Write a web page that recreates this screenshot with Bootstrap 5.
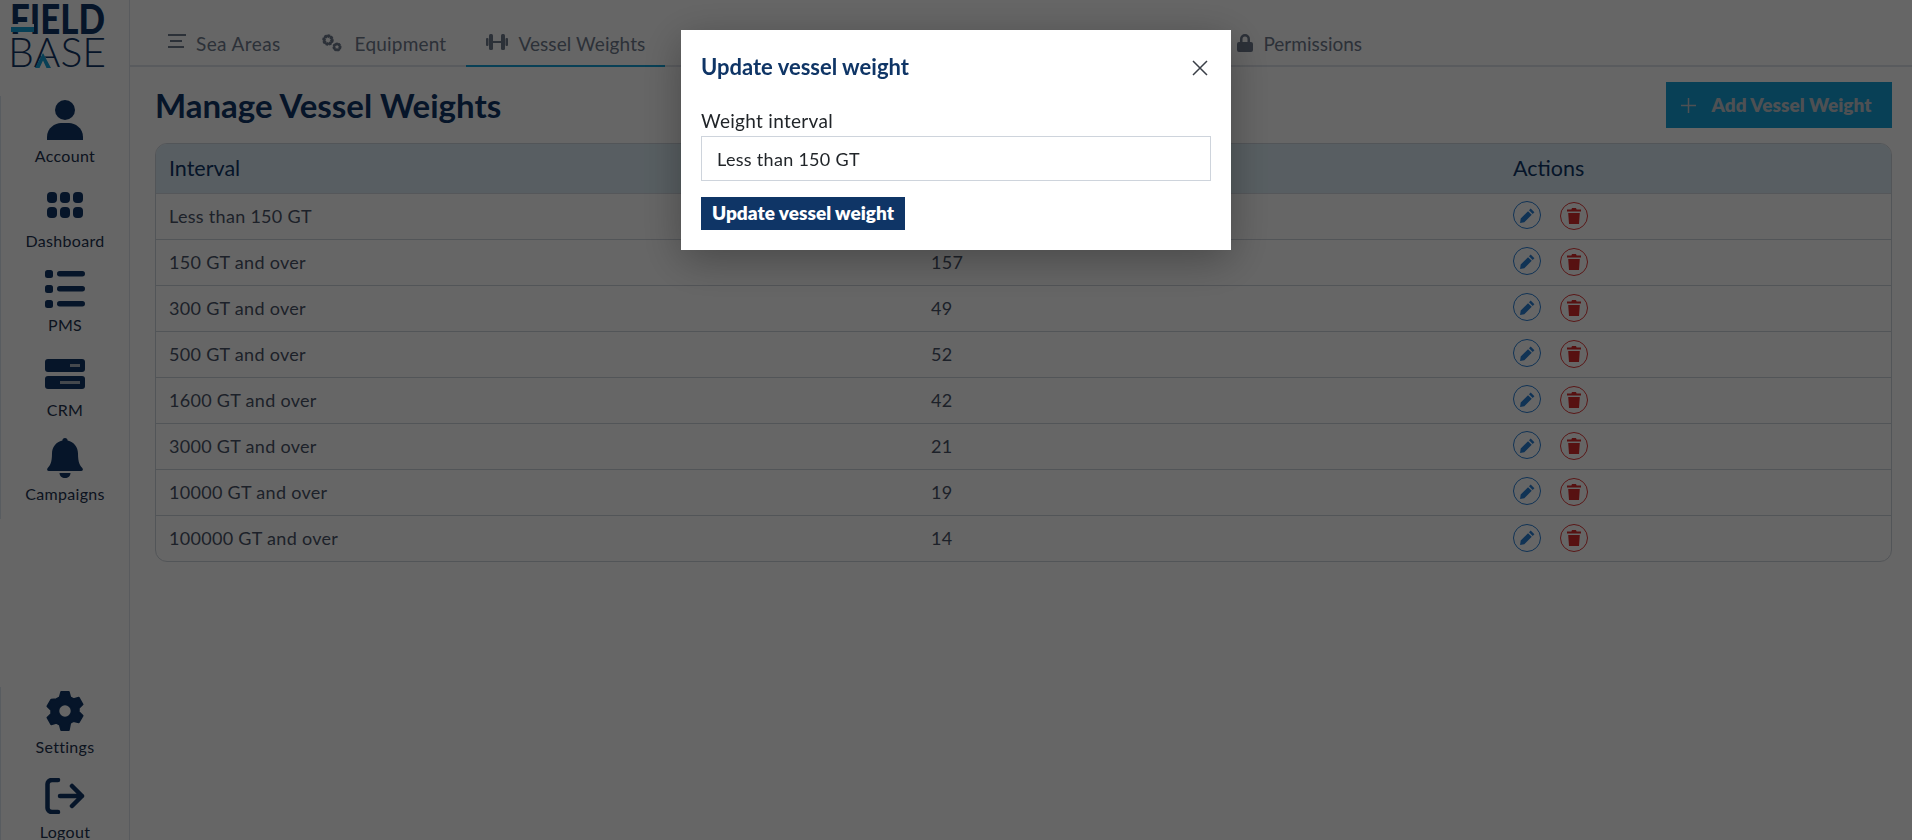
<!DOCTYPE html>
<html lang="en">
  <head>
    <meta charset="utf-8" />
    <meta name="viewport" content="width=device-width, initial-scale=1" />
    <title>Manage Vessel Weights</title>
    <link href="https://cdn.jsdelivr.net/npm/bootstrap@5.3.3/dist/css/bootstrap.min.css" rel="stylesheet" />
    <style>
      html, body { height: 100%; overflow: hidden; }
      body {
        font-family: "Lato", "Noto Sans", sans-serif;
        background: #fff;
        color: #3f4a5f;
      }
      .shell { height: 840px; }
      .side-bar {
        width: 130px;
        flex: none;
        border-right: 1px solid #dfe3ea;
      }
      .logo-box {
        height: 70px;
        padding: 2px 0 0 10px;
        position: relative;
        color: #0f3566;
      }
      .logo-top { font-size: 41px; font-weight: 900; line-height: 34px; transform: scaleX(0.85); transform-origin: left center; }
      .logo-low { font-size: 41px; font-weight: 300; line-height: 32px; margin-left: -2px; }
      .logo-bar { position: absolute; left: 11px; top: 24px; width: 23px; height: 8px; border-top: 3px solid #fff; background: #14a0d6; }
      .logo-peak { position: absolute; left: 34px; top: 52px; }
      .side-link {
        height: 84.5px;
        color: #0f3566;
        font-size: 16px;
        letter-spacing: 0.3px;
        text-decoration: none;
        border-left: 1px solid #dce6f0;
      }
      .side-link span { line-height: 18px; color: #22324f; margin-top: 3px; }
      .side-icon { height: 48px; display: flex; align-items: center; justify-content: center; }
      .side-list { padding-top: 26px; }
      .side-foot { margin-top: auto; margin-bottom: -16px; }
      .main-area { min-width: 0; padding: 0 20px 0 25px; }
      .tab-row { height: 67px; margin-left: -25px; margin-right: -20px; padding-left: 18px; border-bottom: 2px solid #dfe3ea; }
      .tab-item {
        height: 67px;
        padding: 27px 20px 0;
        color: #6f7a8d;
        font-size: 19px;
        letter-spacing: 0.4px;
        line-height: 33px;
        display: flex;
        gap: 10px;
        text-decoration: none;
        border-bottom: 2px solid transparent;
      }
      .tab-item svg { margin-top: 7px; flex: none; }
      .tab-equip { letter-spacing: 0.2px; }
      .tab-equip svg { margin-right: 2px; }
      .tab-on { border-bottom-color: #14a0d6; letter-spacing: 0.1px; }
      .tab-lock { letter-spacing: 0; }
      .tab-gap { width: 552px; flex: none; }
      .head-row { height: 76px; padding-top: 15px; }
      .page-title { color: #0f3566; font-size: 33px; font-weight: 700; margin: 4px 0 0; line-height: 38px; }
      .add-btn {
        background: #14a0d6;
        color: #c4c9cf;
        border: 0;
        border-radius: 0;
        height: 46px;
        width: 226px;
        font-size: 19px;
        font-weight: 800;
        padding-right: 18px;
      }
      .add-btn:hover { background: #14a0d6; color: #c4c9cf; }
      .grid-wrap {
        border: 1px solid #ced4dc;
        border-radius: 12px;
        overflow: hidden;
      }
      .grid-tbl { table-layout: fixed; margin: 0; width: 100%; }
      .grid-tbl th {
        background: #dcecf4;
        color: #0f3566;
        font-size: 21.500px;
        font-weight: 400;
        height: 49px;
        padding: 0 13px;
        vertical-align: middle;
        border-bottom: 1px solid #d5dae2;
      }
      .grid-tbl td {
        height: 46px;
        padding: 0 13px;
        vertical-align: middle;
        font-size: 18px;
        letter-spacing: 0.3px;
        color: #4a5468;
        border-bottom: 1px solid #ced4dc;
      }
      .grid-tbl tr:last-child td { border-bottom: 0; }
      .col-a { width: 762px; }
      .col-b { width: 582px; }
      .act-btn {
        width: 28px;
        height: 28px;
        border-radius: 50%;
        background: transparent;
        padding: 0;
        display: inline-flex;
        align-items: center;
        justify-content: center;
        border: 1.2px solid #2a7fd5;
      }
      .act-del { border-color: #e03a3a; margin-left: 19px; }
      .modal-backdrop.show { opacity: 0.6; }
      .modal-dialog.weight-dlg { max-width: 550px; margin: 30px auto 0; }
      .weight-dlg .modal-content {
        border: 0;
        border-radius: 0;
        box-shadow: 0 10px 40px rgba(0, 0, 0, 0.3);
        padding: 20px;
        height: 220px;
      }
      .dlg-title { color: #0f3566; font-size: 22px; font-weight: 700; margin: 0; line-height: 34px; }
      .dlg-close { line-height: 0; margin: 10px 3px 0 0; }
      .dlg-label { font-size: 19px; letter-spacing: 0.3px; color: #212529; margin: 24px 0 0; line-height: 26px; }
      .dlg-input {
        border-radius: 0;
        height: 45px;
        border: 1px solid #ced4dc;
        padding: 0 15px;
        font-size: 18px;
        letter-spacing: 0.3px;
        color: #212529;
        margin-top: 2px;
      }
      .dlg-btn {
        background: #0f3566;
        color: #fff;
        border: 0;
        border-radius: 0;
        height: 33px;
        width: 204px;
        padding: 0;
        font-size: 19px;
        font-weight: 800;
        margin-top: 16px;
      }
      .dlg-btn:hover { background: #0f3566; color: #fff; }
    </style>
  </head>
  <body>
    <div class="d-flex shell">
      <aside class="side-bar d-flex flex-column">
        <div class="logo-box">
          <div class="logo-top">FIELD</div>
          <div class="logo-low">BASE</div>
          <div class="logo-bar"></div>
          <svg class="logo-peak" width="18" height="16" viewBox="0 0 18 16"><path d="M9 0l7 16H2z" fill="#fff"/><path d="M9 1l8 15h-4.500L9 8.500 5.500 16H1z" fill="#14a0d6"/></svg>
        </div>
        <nav class="side-list d-flex flex-column flex-grow-1">
          <a class="side-link d-flex flex-column align-items-center" href="#">
            <div class="side-icon"><svg width="36" height="40" viewBox="0 0 36 40" fill="#0f3566"><circle cx="18" cy="10" r="10"/><path d="M0 40v-3c0-9 8-14 14-14h8c6 0 14 5 14 14v3z"/></svg></div>
            <span>Account</span>
          </a>
          <a class="side-link d-flex flex-column align-items-center" href="#">
            <div class="side-icon"><svg width="36" height="26" viewBox="0 0 36 26" fill="#0f3566"><rect width="10" height="11" rx="4"/><rect x="13" width="10" height="11" rx="4"/><rect x="26" width="10" height="11" rx="4"/><rect y="15" width="10" height="11" rx="4"/><rect x="13" y="15" width="10" height="11" rx="4"/><rect x="26" y="15" width="10" height="11" rx="4"/></svg></div>
            <span>Dashboard</span>
          </a>
          <a class="side-link d-flex flex-column align-items-center" href="#">
            <div class="side-icon"><svg width="40" height="38" viewBox="0 0 40 38" fill="#0f3566"><rect width="8" height="8" rx="2.500"/><rect y="15" width="8" height="8" rx="2.500"/><rect y="30" width="8" height="8" rx="2.500"/><rect x="12" y="1" width="28" height="5.500" rx="2.700"/><rect x="12" y="16" width="28" height="5.500" rx="2.700"/><rect x="12" y="31" width="28" height="5.500" rx="2.700"/></svg></div>
            <span>PMS</span>
          </a>
          <a class="side-link d-flex flex-column align-items-center" href="#">
            <div class="side-icon"><svg width="40" height="30" viewBox="0 0 40 30"><rect width="40" height="13" rx="3" fill="#0f3566"/><rect y="17" width="40" height="13" rx="3" fill="#0f3566"/><rect x="25" y="5" width="10" height="3" fill="#aab3c0"/><rect x="15" y="22" width="20" height="3" fill="#aab3c0"/></svg></div>
            <span>CRM</span>
          </a>
          <a class="side-link d-flex flex-column align-items-center" href="#">
            <div class="side-icon"><svg width="36" height="40" viewBox="0 0 36 40" fill="#0f3566"><path d="M18 0c1.600 0 2.600 1.100 2.600 2.600C27 4 31 9.400 31 15.500c0 9 2 12 4.300 14.600.8.900 1 2.900-1 2.900H1.700c-2 0-1.800-2-1-2.900C3 27.500 5 24.500 5 15.500 5 9.400 9 4 15.400 2.600 15.400 1.100 16.400 0 18 0z"/><path d="M12.500 35h11c0 3-2.500 5-5.500 5s-5.500-2-5.500-5z"/></svg></div>
            <span>Campaigns</span>
          </a>
          <div class="side-foot">
            <a class="side-link d-flex flex-column align-items-center" href="#">
              <div class="side-icon"><svg width="38" height="40" viewBox="-1 -1 40 42"><path fill="#0f3566" stroke="#0f3566" stroke-width="2" stroke-linejoin="round" fill-rule="evenodd" d="M15 0h8l1.500 5.500 3.500 2 5.500-1.500 4 7-4 4v4l4 4-4 7-5.500-1.500-3.500 2L23 40h-8l-1.500-5.500-3.500-2L4.500 34l-4-7 4-4v-4l-4-4 4-7L10 7.500l3.500-2zM19 13a7 7 0 1 0 0 14 7 7 0 0 0 0-14z"/></svg></div>
              <span>Settings</span>
            </a>
            <a class="side-link d-flex flex-column align-items-center" href="#">
              <div class="side-icon"><svg width="40" height="36" viewBox="0 0 40 36" fill="none" stroke="#0f3566" stroke-width="4.500" stroke-linecap="round" stroke-linejoin="round"><path d="M13 2H7C4 2 2.500 4 2.500 6v24C2.500 32 4 34 7 34h6"/><path d="M15 18h22M27 8l10 10-10 10"/></svg></div>
              <span>Logout</span>
            </a>
          </div>
        </nav>
      </aside>

      <main class="main-area flex-grow-1">
        <div class="tab-row d-flex">
          <a class="tab-item" href="#"><svg width="18" height="14" viewBox="0 0 18 14" fill="#6f7a8d"><rect width="18" height="2"/><rect x="2" y="6" width="12" height="2"/><rect y="12" width="16" height="2"/></svg>Sea Areas</a>
          <a class="tab-item tab-equip" href="#"><svg width="22" height="18" viewBox="0 0 22 18"><circle cx="7" cy="6" r="4" fill="none" stroke="#6f7a8d" stroke-width="3.500" stroke-dasharray="2.200 .8"/><circle cx="7" cy="6" r="4" fill="none" stroke="#6f7a8d" stroke-width="2"/><circle cx="16" cy="13" r="3" fill="none" stroke="#6f7a8d" stroke-width="3" stroke-dasharray="1.800 .7"/><circle cx="16" cy="13" r="3" fill="none" stroke="#6f7a8d" stroke-width="1.800"/></svg>Equipment</a>
          <a class="tab-item tab-on" href="#"><svg width="22" height="16" viewBox="0 0 22 16" fill="#6f7a8d"><rect x="0" y="4" width="2.500" height="8" rx="1"/><rect x="3" y="0" width="4" height="16" rx="1.500"/><rect x="7" y="7" width="8" height="2"/><rect x="15" y="0" width="4" height="16" rx="1.500"/><rect x="19.500" y="4" width="2.500" height="8" rx="1"/></svg>Vessel Weights</a>
          <div class="tab-gap"></div>
          <a class="tab-item tab-lock" href="#"><svg width="16" height="18" viewBox="0 0 16 18" fill="#6f7a8d"><path d="M3 8V5a5 5 0 0 1 10 0v3h1a2 2 0 0 1 2 2v6a2 2 0 0 1-2 2H2a2 2 0 0 1-2-2v-6a2 2 0 0 1 2-2zm2.500 0h5V5a2.500 2.500 0 0 0-5 0z"/></svg>Permissions</a>
        </div>

        <div class="head-row d-flex justify-content-between align-items-start">
          <h1 class="page-title">Manage Vessel Weights</h1>
          <button class="btn add-btn d-flex align-items-center justify-content-center gap-3" type="button">
            <svg width="15" height="15" viewBox="0 0 15 15" stroke="#c4c9cf" stroke-width="1.500"><path d="M7.500 0v15M0 7.500h15"/></svg>Add Vessel Weight
          </button>
        </div>

        <div class="grid-wrap">
          <table class="table grid-tbl">
            <thead>
              <tr><th class="col-a">Interval</th><th class="col-b"></th><th>Actions</th></tr>
            </thead>
            <tbody id="rows"></tbody>
          </table>
        </div>
      </main>
    </div>

    <div class="modal-backdrop show"></div>
    <div class="modal d-block" tabindex="-1">
      <div class="modal-dialog weight-dlg">
        <div class="modal-content">
          <div class="d-flex justify-content-between align-items-start">
            <h5 class="dlg-title">Update vessel weight</h5>
            <button type="button" class="btn p-0 border-0 dlg-close" aria-label="Close">
              <svg width="16" height="16" viewBox="0 0 16 16" stroke="#3a3f47" stroke-width="1.500"><path d="M1 1l14 14M15 1 1 15"/></svg>
            </button>
          </div>
          <label class="dlg-label" for="weightInterval">Weight interval</label>
          <input id="weightInterval" class="form-control dlg-input" type="text" value="Less than 150 GT" />
          <div><button class="btn dlg-btn" type="button">Update vessel weight</button></div>
        </div>
      </div>
    </div>

    <script src="https://cdn.jsdelivr.net/npm/bootstrap@5.3.3/dist/js/bootstrap.bundle.min.js"></script>
    <script>
      const data = [
        ["Less than 150 GT", ""],
        ["150 GT and over", "157"],
        ["300 GT and over", "49"],
        ["500 GT and over", "52"],
        ["1600 GT and over", "42"],
        ["3000 GT and over", "21"],
        ["10000 GT and over", "19"],
        ["100000 GT and over", "14"],
      ];
      const pencil = '<svg width="17" height="17" viewBox="0 0 16 16" fill="#2a7fd5"><path d="M11 1.500l3.500 3.500-1.600 1.600-3.500-3.500zM8.500 3.900 12 7.400 5 14.400 1 15l.6-4.100z"/></svg>';
      const bin = '<svg width="14" height="16" viewBox="0 0 14 16" fill="#d92b2b"><path d="M5 0h4l.6 1.500H14V3.500H0V1.500h4.400zM1.200 5h11.600l-.8 11H2z"/></svg>';
      document.getElementById("rows").innerHTML = data
        .map(
          (r) => `<tr><td>${r[0]}</td><td>${r[1]}</td><td><button class="act-btn" type="button">${pencil}</button><button class="act-btn act-del" type="button">${bin}</button></td></tr>`
        )
        .join("");
    </script>
  </body>
</html>
